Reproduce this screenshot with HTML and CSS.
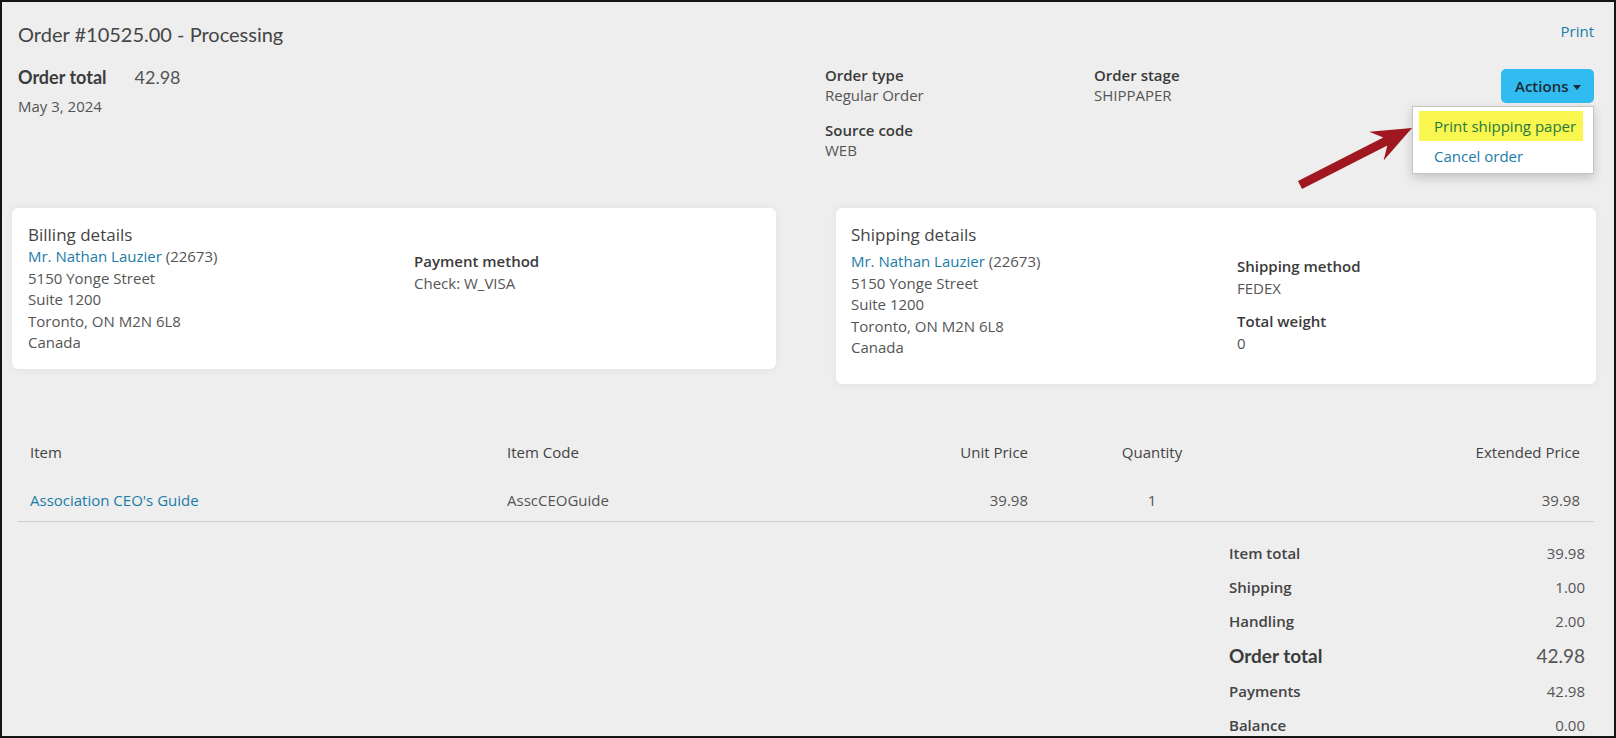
FILE: index.html
```html
<!DOCTYPE html>
<html lang="en">
<head>
    <meta charset="UTF-8">
    <meta name="viewport" content="width=device-width, initial-scale=1.0">
    <title>Order #10525.00</title>
    <link rel="stylesheet" href="styles.css">
</head>
<body>
    <div class="page">
        <!-- title -->
        <div class="topbar">
            <h1 class="title">Order #10525.00 - Processing</h1>
            <a class="link print" href="#">Print</a>
        </div>

        <!-- order header -->
        <div class="head">
            <div class="overview">
                <div class="total-line">
                    <span class="big-label">Order total</span>
                    <span class="big-value">42.98</span>
                </div>
                <div class="date">May 3, 2024</div>
            </div>
            <div class="meta">
                <div class="field">
                    <div class="label">Order type</div>
                    <div class="value">Regular Order</div>
                </div>
                <div class="field">
                    <div class="label">Order stage</div>
                    <div class="value">SHIPPAPER</div>
                </div>
                <div class="field">
                    <div class="label">Source code</div>
                    <div class="value">WEB</div>
                </div>
            </div>
            <div class="actions">
                <button class="btn-actions" type="button">Actions <span class="caret"></span></button>
                <div class="menu">
                    <a class="menu-item highlight" href="#">Print shipping paper</a>
                    <a class="menu-item" href="#">Cancel order</a>
                </div>
            </div>
        </div>

        <!-- annotation arrow -->
        <svg class="arrow" width="130" height="100" viewBox="0 0 130 100">
            <polygon points="8,86 93.3,42.6 79.2,36.8 122,33 93.6,65.4 97.3,50.6 12,94" fill="#a0171f"/>
        </svg>

        <!-- billing / shipping -->
        <div class="cards">
            <div class="card">
                <div class="card-title">Billing details</div>
                <div class="card-body">
                    <div class="lines">
                        <div><a class="link" href="#">Mr. Nathan Lauzier</a> (22673)</div>
                        <div>5150 Yonge Street</div>
                        <div>Suite 1200</div>
                        <div>Toronto, ON M2N 6L8</div>
                        <div>Canada</div>
                    </div>
                    <div class="side">
                        <div class="label">Payment method</div>
                        <div class="value">Check: W_VISA</div>
                    </div>
                </div>
            </div>
            <div class="card card-ship">
                <div class="card-title">Shipping details</div>
                <div class="card-body">
                    <div class="lines">
                        <div><a class="link" href="#">Mr. Nathan Lauzier</a> (22673)</div>
                        <div>5150 Yonge Street</div>
                        <div>Suite 1200</div>
                        <div>Toronto, ON M2N 6L8</div>
                        <div>Canada</div>
                    </div>
                    <div class="side">
                        <div class="label">Shipping method</div>
                        <div class="value">FEDEX</div>
                        <div class="label next">Total weight</div>
                        <div class="value">0</div>
                    </div>
                </div>
            </div>
        </div>

        <!-- items -->
        <table class="items">
            <thead>
                <tr>
                    <th class="c-item">Item</th>
                    <th class="c-code">Item Code</th>
                    <th class="c-price num">Unit Price</th>
                    <th class="c-qty mid">Quantity</th>
                    <th class="c-ext num">Extended Price</th>
                </tr>
            </thead>
            <tbody>
                <tr>
                    <td><a class="link" href="#">Association CEO's Guide</a></td>
                    <td>AsscCEOGuide</td>
                    <td class="num">39.98</td>
                    <td class="mid">1</td>
                    <td class="num">39.98</td>
                </tr>
            </tbody>
        </table>

        <!-- totals -->
        <div class="totals">
            <div class="row"><span class="t-label">Item total</span><span>39.98</span></div>
            <div class="row"><span class="t-label">Shipping</span><span>1.00</span></div>
            <div class="row"><span class="t-label">Handling</span><span>2.00</span></div>
            <div class="row row-big"><span class="big-label">Order total</span><span class="big-value">42.98</span></div>
            <div class="row"><span class="t-label">Payments</span><span>42.98</span></div>
            <div class="row"><span class="t-label">Balance</span><span>0.00</span></div>
        </div>
    </div>
</body>
</html>
```

FILE: styles.css
```css
body {
    margin: 0;
    font-family: "Open Sans", "Liberation Sans", sans-serif;
    font-size: 15px;
    color: #555;
}

.page {
    position: relative;
    box-sizing: border-box;
    width: 1616px;
    height: 738px;
    overflow: hidden;
    border: 2px solid #151515;
    background-color: #eeeeee;
    padding: 18px 20px 0 16px;
}

.link {
    color: #1b7ca8;
    text-decoration: none;
}

/* title row */
.topbar {
    display: flex;
    justify-content: space-between;
    align-items: flex-start;
    height: 26px;
}
.title {
    margin: 0;
    font-family: "Lato", "Open Sans", sans-serif;
    font-weight: 400;
    font-size: 20px;
    line-height: 28px;
    color: #454545;
}
.print {
    line-height: 22px;
}

/* header */
.head {
    display: flex;
    margin-top: 18px;
}
.overview {
    width: 807px;
}
.total-line {
    display: flex;
    gap: 28px;
    line-height: 26px;
}
.big-label {
    font-family: "Lato", "Open Sans", sans-serif;
    font-weight: 700;
    font-size: 18px;
    color: #3c3c3c;
}
.big-value {
    font-family: "Lato", "Open Sans", sans-serif;
    font-size: 18px;
    color: #555;
}
.date {
    margin-top: 6px;
    line-height: 20px;
}

.meta {
    display: grid;
    grid-template-columns: 269px 269px;
    row-gap: 14px;
    padding-top: 1px;
}
.label {
    font-weight: 600;
    color: #3a3a3a;
    line-height: 20px;
}
.value {
    line-height: 21px;
}

/* actions dropdown */
.actions {
    position: relative;
    margin-left: auto;
    padding-top: 5px;
}
.btn-actions {
    display: flex;
    align-items: center;
    gap: 5px;
    height: 34px;
    width: 93px;
    padding: 0 0 0 14px;
    border: none;
    border-radius: 5px;
    background-color: #30bcf0;
    font-family: "Open Sans", sans-serif;
    font-weight: 600;
    font-size: 15px;
    color: #1d2a36;
}
.caret {
    width: 0;
    height: 0;
    margin-top: 2px;
    border-top: 5px solid #1d2a36;
    border-left: 4px solid transparent;
    border-right: 4px solid transparent;
}
.menu {
    position: absolute;
    top: 42px;
    right: 0;
    width: 180px;
    padding: 4px 0 2px;
    background: #fff;
    border: 1px solid #c4c4c4;
    box-shadow: 0 4px 10px rgba(0, 0, 0, 0.18);
    z-index: 2;
}
.menu-item {
    display: block;
    margin: 0 10px 0 6px;
    padding: 4px 15px;
    line-height: 22px;
    color: #1b7ca8;
    text-decoration: none;
    white-space: nowrap;
}
.menu-item.highlight {
    background-color: #f9f650;
    color: #1f7a3d;
}

.arrow {
    position: absolute;
    left: 1288px;
    top: 93px;
}

/* cards */
.cards {
    display: grid;
    grid-template-columns: 764px 760px;
    column-gap: 60px;
    align-items: start;
    margin: 47px 0 0 -6px;
}
.card {
    background: #fff;
    border-radius: 6px;
    box-shadow: 0 0 8px rgba(0, 0, 0, 0.06);
    padding: 16px 16px 15px 16px;
}
.card-title {
    font-size: 17px;
    line-height: 22px;
    color: #444;
}
.card-body {
    display: grid;
    grid-template-columns: 386px 1fr;
}
.lines {
    line-height: 21.5px;
}
.side {
    padding-top: 5px;
}
.side .label,
.side .value {
    line-height: 21.5px;
}
.side .next {
    margin-top: 12px;
}
.card-ship {
    padding-left: 15px;
    padding-bottom: 25px;
}
.card-ship .card-body {
    margin-top: 5px;
}

/* items table */
.items {
    width: 1576px;
    margin-top: 48px;
    border-collapse: collapse;
    table-layout: fixed;
}
.items th {
    font-weight: 400;
    color: #444;
    text-align: left;
    line-height: 20px;
    padding: 10px 12px;
    white-space: nowrap;
}
.items td {
    line-height: 20px;
    padding: 18px 12px 11px;
    border-bottom: 1px solid #cfcfcf;
}
.c-item { width: 453px; }
.c-code { width: 376px; }
.c-price { width: 121px; }
.c-qty { width: 200px; }
.items .num { text-align: right; }
.items .mid { text-align: center; }
.items th.c-ext { padding-right: 14px; }
.items td:last-child { padding-right: 14px; }

/* totals */
.totals {
    width: 356px;
    margin: 14px 9px 0 auto;
}
.row {
    display: flex;
    justify-content: space-between;
    line-height: 20px;
    padding: 7px 0;
}
.t-label {
    font-weight: 600;
    color: #444;
}
.row-big {
    line-height: 22px;
}
.row-big .big-label {
    font-weight: 700;
    font-size: 19px;
}
.row-big .big-value {
    font-size: 19px;
}
```
